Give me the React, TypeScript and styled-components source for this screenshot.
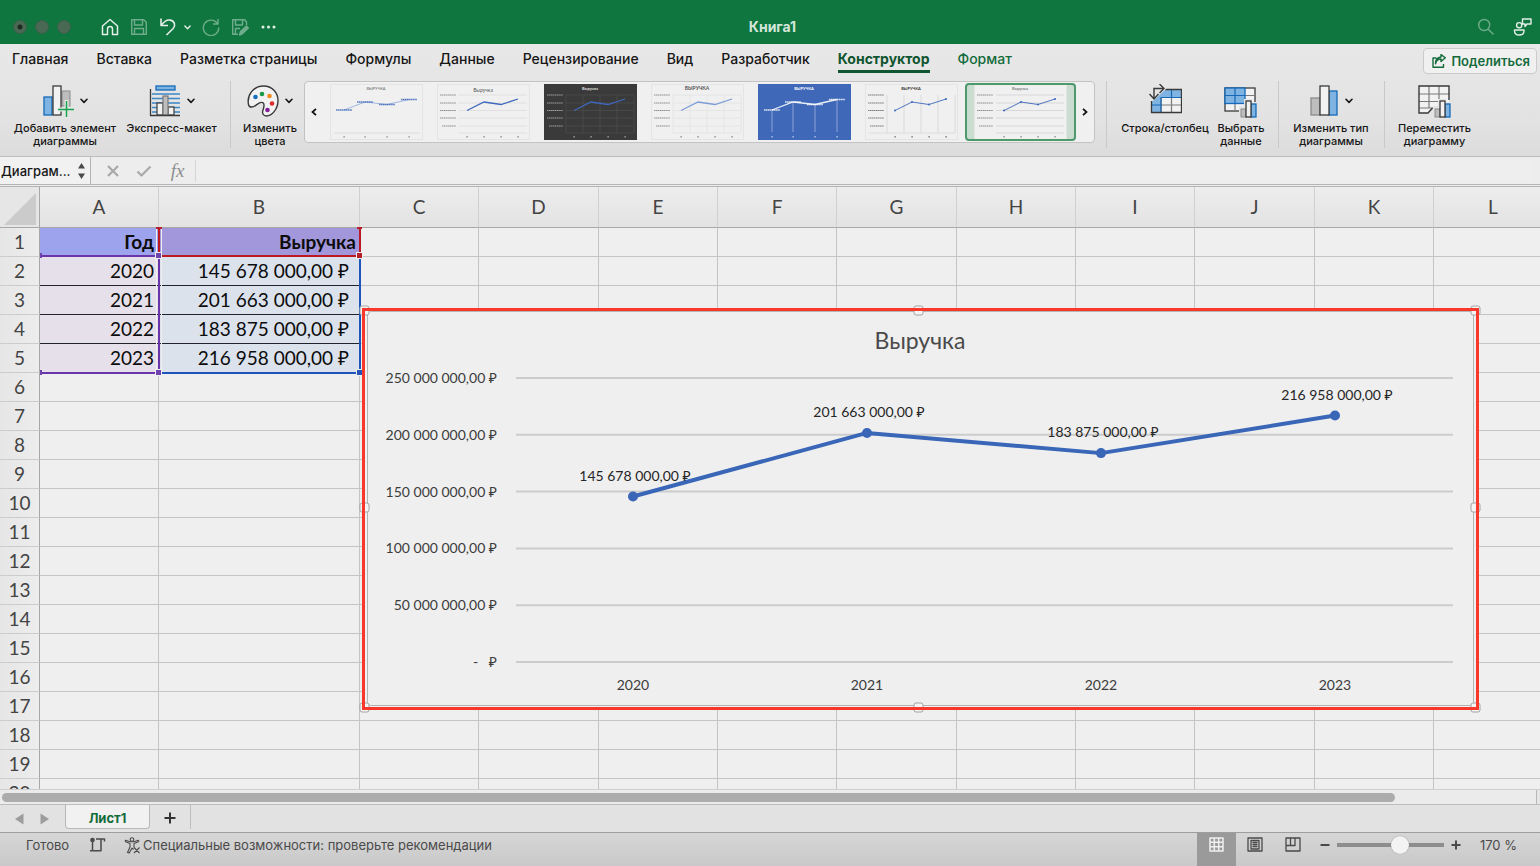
import React from "react";
import styled, { createGlobalStyle, css } from "styled-components";

const UI = `Inter, "Liberation Sans", sans-serif`;
const SHEET = `Lato, "Noto Sans", "Liberation Sans", sans-serif`;

const Global = createGlobalStyle`
  * { box-sizing: border-box; }
  body { margin: 0; font-family: ${UI}; background: #efefef; overflow: hidden; }
  button, input { font-family: inherit; color: inherit; }
  button { border: 0; padding: 0; margin: 0; background: none; }
  svg { display: block; flex: none; }
`;

const Window = styled.div`
  display: flex;
  flex-direction: column;
  height: 100vh;
`;

/* ---------- title bar ---------- */
const TitleBar = styled.header`
  display: grid;
  grid-template-columns: 1fr auto 1fr;
  align-items: center;
  height: 44px;
  padding: 10px 8px 0 13px;
  background: #0f763f;
  color: #e4efe8;
`;
const TitleGroup = styled.div<{ $end?: boolean }>`
  display: flex;
  align-items: center;
  justify-content: ${(p) => (p.$end ? "flex-end" : "flex-start")};
  gap: ${(p) => (p.$end ? 18 : 11)}px;
`;
const UndoGroup = styled.div`
  display: flex;
  align-items: center;
  gap: 7px;
`;
const Lights = styled.div`
  display: flex;
  gap: 8px;
  margin-right: 19px;
`;
const Light = styled.button<{ $dot?: boolean }>`
  width: 14px;
  height: 14px;
  border-radius: 50%;
  border: 1px solid #3b5f49;
  background: ${(p) =>
    p.$dot ? "radial-gradient(circle, #1c2a21 0 2px, #4a6955 3px)" : "#4a6955"};
`;
const Title = styled.h1`
  margin: 0;
  font-size: 14px;
  line-height: 18px;
  font-weight: 700;
  color: #d3e6da;
`;
const IconButton = styled.button<{ $dim?: boolean }>`
  display: flex;
  align-items: center;
  opacity: ${(p) => (p.$dim ? 0.45 : 1)};
`;

/* ---------- ribbon ---------- */
const Ribbon = styled.section`
  height: 112px;
  background: linear-gradient(#e8e8e8, #e2e2e2 70%, #dcdcdc);
`;
const TabRow = styled.nav`
  display: flex;
  align-items: center;
  justify-content: space-between;
  height: 32px;
  padding: 0 3px 0 12px;
`;
const Tabs = styled.div`
  display: flex;
  gap: 28px;
`;
const Tab = styled.button<{ $state?: "active" | "context" }>`
  height: 28px;
  margin-bottom: 2px;
  padding-top: 2px;
  font-size: 14px;
  line-height: 22px;
  font-weight: 500;
  color: #161616;
  border-bottom: 3px solid transparent;
  ${(p) => p.$state && css`color: #136b3b;`}
  ${(p) =>
    p.$state === "active" &&
    css`
      font-weight: 700;
      color: #0f5530;
      border-bottom-color: #0f5530;
    `}
`;
const Share = styled.button`
  display: flex;
  align-items: center;
  gap: 5px;
  height: 26px;
  margin-top: 2px;
  padding: 0 6px 0 8px;
  border: 1px solid #cbcbcb;
  border-radius: 4px;
  background: #f0f0f0;
  color: #136b3b;
  font-size: 13px;
  font-weight: 600;
`;
const Tools = styled.div`
  display: flex;
  height: 80px;
  padding: 5px 61px 8px 12px;
`;
const Tool = styled.button<{ $w: number }>`
  display: flex;
  flex-direction: column;
  align-items: center;
  width: ${(p) => p.$w}px;
  margin-right: 7px;
  padding-top: 3px;
  color: #161616;
  font-size: 11px;
  line-height: 13px;
  font-weight: 500;
  white-space: nowrap;
`;
const ToolIcon = styled.span`
  display: flex;
  align-items: center;
  gap: 6px;
  height: 34px;
  margin-bottom: 4px;
`;
const Divider = styled.span<{ $l?: number; $r?: number }>`
  width: 1px;
  margin: 0 ${(p) => p.$r ?? 12}px 0 ${(p) => p.$l ?? 6}px;
  height: 67px;
  background: #c9c9c9;
`;
const Gallery = styled.div`
  display: flex;
  flex: 1;
  min-width: 0;
  height: 62px;
  border: 1px solid #c3c3c3;
  border-radius: 4px;
  background: #f0f0f0;
  overflow: hidden;
`;
const GalleryArrow = styled.button`
  display: flex;
  align-items: center;
  justify-content: center;
  width: 18px;
`;
const Thumb = styled.button<{ $selected?: boolean }>`
  display: flex;
  flex: 1;
  align-items: center;
  justify-content: center;
  height: 58px;
  margin-top: 1px;
  border-radius: 4px;
  overflow: hidden;
  ${(p) =>
    p.$selected &&
    css`
      background: #cbdcd0;
      border: 2px solid #4c9a6c;
    `}
`;

/* ---------- formula bar ---------- */
const FormulaBar = styled.div`
  display: flex;
  align-items: center;
  height: 31px;
  border-top: 1px solid #bdbdbd;
  border-bottom: 3px double #b4b4b4;
  background: #ededed;
  color: #a9a9a9;
`;
const NameBox = styled.div`
  display: flex;
  align-items: center;
  justify-content: space-between;
  align-self: stretch;
  width: 91px;
  padding: 0 4px 0 1px;
  border-right: 1px solid #b4b4b4;
  background: #f1f1f1;
  color: #161616;
`;
const NameInput = styled.input`
  width: 72px;
  padding: 0;
  border: 0;
  outline: 0;
  background: none;
  font-size: 13px;
  font-weight: 500;
`;
const FxTools = styled.div`
  display: flex;
  align-items: center;
  gap: 16px;
  padding: 0 8px 0 15px;
`;
const FxButton = styled.button`
  width: 19px;
  font: italic 19px/22px "Liberation Serif", serif;
  color: #8f8f8f;
`;
const FormulaInput = styled.input`
  flex: 1;
  height: 22px;
  margin-right: 8px;
  border: 0;
  border-left: 1px solid #d5d5d5;
  outline: 0;
  background: #eeeeee;
`;

/* ---------- sheet ---------- */
const Sheet = styled.main`
  position: relative;
  flex: 1;
  min-height: 0;
  overflow: hidden;
  background: #efefef;
  font-family: ${SHEET};
`;
const Grid = styled.table`
  width: 1553px;
  table-layout: fixed;
  border-collapse: separate;
  border-spacing: 0;
  font-size: 19px;
  line-height: 28px;
  color: #0c0c0c;
`;
const ColHead = styled.th`
  height: 41px;
  padding: 0;
  border-right: 1px solid #d0d0d0;
  border-bottom: 1px solid #a8a8a8;
  background: linear-gradient(#ededed, #e3e3e3);
  color: #444;
  font-weight: 400;
`;
const Corner = styled.th`
  height: 41px;
  padding: 0 2px 0 0;
  border-right: 1px solid #a8a8a8;
  border-bottom: 1px solid #a8a8a8;
  background: #e6e6e6;
`;
const RowHead = styled.th`
  height: 29px;
  padding: 0;
  border-right: 1px solid #a8a8a8;
  border-bottom: 1px solid #cccccc;
  background: linear-gradient(90deg, #e6e6e6, #ededed);
  color: #444;
  font-weight: 400;
`;
type Tone = "yearHead" | "sumHead" | "year" | "sum";
const tones: Record<Tone, string> = {
  yearHead: "#9ea3ee",
  sumHead: "#a397dc",
  year: "#e6e0ea",
  sum: "#dbe2ec",
};
const insets: Record<Tone, number> = { yearHead: 4, sumHead: 3, year: 4, sum: 10 };
const Cell = styled.td<{ $tone?: Tone; $ruled?: boolean }>`
  height: 29px;
  padding: 0 ${(p) => (p.$tone ? insets[p.$tone] : 0)}px 0 0;
  border-right: 1px solid #c4c4c4;
  border-bottom: 1px solid ${(p) => (p.$ruled ? "#22222a" : "#c4c4c4")};
  text-align: right;
  white-space: nowrap;
  font-weight: ${(p) => (p.$tone?.endsWith("Head") ? 700 : 400)};
  background: ${(p) => (p.$tone ? tones[p.$tone] : "transparent")};
`;
const Overlay = styled.svg`
  position: absolute;
  left: 0;
  top: 0;
  pointer-events: none;
`;
const ChartObject = styled.figure`
  position: absolute;
  left: 362px;
  top: 121px;
  margin: 0;
  svg { overflow: visible; }
`;

/* ---------- bottom bars ---------- */
const ScrollRow = styled.div`
  display: flex;
  height: 16px;
  padding-right: 3px;
  border-top: 1px solid #cfcfcf;
  border-bottom: 1px solid #bdbdbd;
  background: #e6e6e6;
`;
const ScrollTrack = styled.div`
  flex: 1;
  padding: 3px 141px 0 2px;
  border-right: 1px solid #b8b8b8;
  background: #ebebeb;
`;
const ScrollThumb = styled.div`
  height: 9px;
  border-radius: 5px;
  background: #acacac;
`;
const SheetTabs = styled.div`
  display: flex;
  height: 27px;
  background: #e2e2e2;
  color: #9c9c9c;
`;
const SheetNav = styled.div`
  display: flex;
  align-items: center;
  gap: 16px;
  width: 65px;
  padding-left: 15px;
`;
const SheetTab = styled.button`
  width: 85px;
  height: 24px;
  padding-top: 2px;
  border: 1px solid #b8b8b8;
  border-top: 0;
  border-radius: 0 0 4px 4px;
  background: #f1f1f1;
  color: #136b3b;
  font-size: 13px;
  font-weight: 700;
`;
const AddSheet = styled.button`
  display: flex;
  align-items: center;
  justify-content: center;
  width: 41px;
  height: 24px;
  padding-top: 2px;
  border-right: 1px solid #bdbdbd;
  color: #333;
`;
const Status = styled.footer`
  display: flex;
  justify-content: space-between;
  height: 34px;
  border-top: 1px solid #9d9d9d;
  background: linear-gradient(#d6d6d6, #c9c9c9);
  color: #4a4a4a;
  font-size: 13px;
`;
const StatusLeft = styled.div`
  display: flex;
  align-items: center;
  height: 24px;
  padding-left: 26px;
`;
const StatusItem = styled.span`
  margin-right: 20px;
`;
const StatusButton = styled.button`
  display: flex;
  align-items: center;
  gap: 2px;
  margin-left: 17px;
  font-size: 13px;
`;
const StatusRight = styled.div`
  display: flex;
`;
const ViewButton = styled.button<{ $active?: boolean }>`
  display: flex;
  justify-content: center;
  align-items: flex-start;
  width: 38px;
  padding-top: 4px;
  ${(p) =>
    p.$active &&
    css`
      width: 39px;
      background: #9a9a9a;
      color: #f0f0f0;
    `}
`;
const Zoom = styled.div`
  display: flex;
  align-items: center;
  gap: 7px;
  height: 24px;
  padding: 0 23px 0 8px;
`;
const ZoomRange = styled.input`
  appearance: none;
  width: 107px;
  height: 18px;
  margin: 0;
  border-radius: 2px;
  background: linear-gradient(#8d8d8d, #8d8d8d) center / 100% 4px no-repeat;
  &::-webkit-slider-thumb {
    appearance: none;
    width: 18px;
    height: 18px;
    border-radius: 50%;
    background: #f3f3f3;
    box-shadow: 0 0 1px #777;
  }
`;
const ZoomValue = styled.span`
  margin-left: 12px;
  white-space: nowrap;
`;

/* ---------- small drawings ---------- */
const Caret = ({ size = 8 }: { size?: number }) => (
  <svg width={size} height={size} viewBox="0 0 8 8" fill="none" stroke="currentColor" strokeWidth="1.6">
    <path d="M1 2.3 4 5.4 7 2.3" strokeLinecap="round" strokeLinejoin="round" />
  </svg>
);
const Line = ({ d, w = 18, h = 18, sw = 1.4, children }: any) => (
  <svg width={w} height={h} viewBox={`0 0 ${w} ${h}`} fill="none" stroke="currentColor" strokeWidth={sw} strokeLinejoin="round">
    {d && <path d={d} />}
    {children}
  </svg>
);

const BLUE = "#7fb4e2";
const EDGE = "#1569b8";
const DARK = "#3a3a3a";

const AddElementIcon = () => (
  <svg width="31" height="34" viewBox="0 0 31 34">
    <rect x="1" y="13" width="8" height="18" fill={BLUE} stroke={EDGE} strokeWidth="1.3" />
    <rect x="19" y="7" width="8" height="15" fill="#bdbdbd" stroke="#8b8b8b" />
    <rect x="10" y="2" width="8" height="29" fill="#f2f2f2" stroke={DARK} strokeWidth="1.3" />
    <path d="M23.5 16v18M15 25.5h16" stroke="#e6e6e6" strokeWidth="4" />
    <path d="M23.5 17v16M15 25.5h16" stroke="#17a34c" strokeWidth="1.5" />
  </svg>
);
const QuickLayoutIcon = () => (
  <svg width="32" height="34" viewBox="0 0 32 34">
    <rect x="7" y="2" width="19" height="4" fill={BLUE} stroke={EDGE} strokeWidth="1.3" />
    <path d="M3 10h28M3 14.500h28M3 19h28M3 23.500h28M3 28h28" stroke="#3a87c8" strokeWidth="1.3" />
    <rect x="8" y="19" width="6" height="12" fill="#f2f2f2" stroke={DARK} strokeWidth="1.2" />
    <rect x="19" y="23" width="6" height="8" fill="#f2f2f2" stroke={DARK} strokeWidth="1.2" />
    <rect x="14" y="12" width="5" height="19" fill="#bdbdbd" stroke="#777" strokeWidth="1.2" />
    <path d="M1.500 5v26.500H31" fill="none" stroke={DARK} strokeWidth="1.3" />
  </svg>
);
const PaletteIcon = () => (
  <svg width="32" height="34" viewBox="0 0 32 34">
    <path
      d="M1.500 20.500C-.3 11 6.500 2 16.500 2 25 2 31 8.500 31 16.500c0 9-6.500 15.500-11.500 15.500-3.300 0-4.700-2.600-3.500-6 1-3 2.200-6-.2-7.300-2.600-1.400-4.600 1-7 2.700-2.900 2-6.600 2.700-7.300-.9z"
      fill="#f2f2f2" stroke={DARK} strokeWidth="1.4"
    />
    <circle cx="8.500" cy="13" r="2.300" fill="#1671c2" />
    <circle cx="15" cy="10" r="2.300" fill="#189a43" />
    <circle cx="22.500" cy="12" r="2.300" fill="#f08a1d" />
    <circle cx="25" cy="19.500" r="2.300" fill="#e02b2b" />
    <circle cx="20.500" cy="26" r="2.300" fill="#85209a" />
  </svg>
);
const SwapIcon = () => (
  <svg width="34" height="34" viewBox="0 0 34 34">
    <rect x="3.500" y="5.500" width="30" height="23" fill="#f2f2f2" />
    <path d="M3.500 13.500 13 5.500h20.500v8H13v15H3.500z" fill={BLUE} />
    <path d="M13 13.500v15M23.500 13.500v15M13 21h20.500" stroke="#7b7b7b" strokeWidth="1.2" />
    <path d="M23.500 5.500v8M13 13.500h20.500M3.500 21H13M13 13.500v15" stroke={EDGE} strokeWidth="1.2" />
    <path d="M17 5.500h16.500v23h-30V17" fill="none" stroke={DARK} strokeWidth="1.3" />
    <path d="M0 0h18v5L5 17H0z" fill="#e5e5e5" />
    <path d="M6 14.500v-10h9.500M1.500 10 6 15l4.500-5M11.500 0l4.500 4.500-4.500 4.500" fill="none" stroke={DARK} strokeWidth="1.4" />
  </svg>
);
const MiniBars = () => (
  <>
    <path d="M15 19h5v-7h8v3h6v17H15z" fill="#e5e5e5" />
    <rect x="17" y="22" width="5" height="8" fill="#bdbdbd" stroke="#8b8b8b" />
    <rect x="27" y="17" width="5" height="13" fill={BLUE} stroke={EDGE} strokeWidth="1.3" />
    <rect x="22" y="14" width="5" height="16" fill="#f2f2f2" stroke={DARK} strokeWidth="1.3" />
  </>
);
const SelectDataIcon = () => (
  <svg width="34" height="34" viewBox="0 0 34 34">
    <g transform="translate(0 3)">
      <rect x="1" y="1" width="30" height="23" fill="#f2f2f2" stroke={DARK} strokeWidth="1.3" />
      <path d="M11 16v8M21 16v8M21 8.500h10M21 16h10" stroke="#7b7b7b" strokeWidth="1.2" />
      <rect x="1" y="1" width="20" height="15.500" fill={BLUE} stroke={EDGE} strokeWidth="1.3" />
      <path d="M11 1v15.500M1 8.500h20" stroke={EDGE} strokeWidth="1.2" />
      <MiniBars />
    </g>
  </svg>
);
const ChangeTypeIcon = () => (
  <svg width="29" height="34" viewBox="0 0 29 34">
    <rect x="1" y="14" width="9" height="17" fill="#bdbdbd" stroke="#8b8b8b" strokeWidth="1.3" />
    <rect x="19" y="7" width="8" height="24" fill={BLUE} stroke={EDGE} strokeWidth="1.3" />
    <rect x="10" y="2" width="9" height="29" fill="#f2f2f2" stroke={DARK} strokeWidth="1.3" />
  </svg>
);
const MoveChartIcon = () => (
  <svg width="34" height="34" viewBox="0 0 34 34">
    <path d="M1 2h30v22H14l-4 5H1z" fill="#f2f2f2" />
    <path d="M11 2v22M21 2v14M1 10h30M1 17.500h20M1 24h14" stroke="#7b7b7b" strokeWidth="1.2" />
    <path d="M14.500 24 10 29H1V2h30v14" fill="none" stroke={DARK} strokeWidth="1.4" />
    <g transform="translate(0 3)"><MiniBars /></g>
  </svg>
);

/* ---------- chart style thumbnails ---------- */
type ThumbStyle = {
  name: string;
  bg: string;
  ink: string;
  line: string;
  grid?: string;
  vertical?: boolean;
  horizontal?: boolean;
  axis?: boolean;
  labels?: boolean;
  drops?: boolean;
  dots?: boolean;
  caps?: boolean;
  bold?: boolean;
  sw: number;
  selected?: boolean;
};
const thumbs: ThumbStyle[] = [
  { name: "Стиль 1", bg: "#f0f0f0", ink: "#666", line: "#8ba8dc", labels: true, caps: true, sw: 0.8 },
  { name: "Стиль 2", bg: "#f0f0f0", ink: "#555", line: "#3d68bb", grid: "#dcdcdc", horizontal: true, axis: true, sw: 1.3 },
  { name: "Стиль 3", bg: "#3a3a3a", ink: "#ddd", line: "#3d68bb", grid: "#4b4b4b", horizontal: true, vertical: true, axis: true, bold: true, sw: 1.3 },
  { name: "Стиль 4", bg: "#f0f0f0", ink: "#555", line: "#7c9cd8", grid: "#e2e2e2", horizontal: true, vertical: true, axis: true, caps: true, bold: true, sw: 1.3 },
  { name: "Стиль 5", bg: "#3f68b8", ink: "#fff", line: "#e8eefa", labels: true, drops: true, caps: true, bold: true, sw: 1.3 },
  { name: "Стиль 6", bg: "#f0f0f0", ink: "#333", line: "#3d68bb", grid: "#d4d4d4", vertical: true, axis: true, dots: true, caps: true, bold: true, sw: 0.9 },
  { name: "Стиль 7", bg: "#f0f0f0", ink: "#555", line: "#3d68bb", grid: "#d2d2d2", horizontal: true, axis: true, dots: true, sw: 0.9, selected: true },
];
const ThumbChart = ({ s }: { s: ThumbStyle }) => {
  const xs = s.axis ? [30, 47, 64, 81] : [14, 35, 57, 79];
  const ys = s.axis ? [26.5, 18, 20.5, 15] : [26, 18, 20.5, 15.5];
  const light = s.bg === "#f0f0f0";
  return (
    <svg width="93" height="56" viewBox="0 0 93 56" fontFamily="Lato, sans-serif" fill={s.ink}>
      <rect x=".5" y=".5" width="92" height="55" fill={s.bg} stroke={light ? "#e4e4e4" : s.bg} />
      <text x="46" y={s.name === "Стиль 2" ? 8 : 6} fontSize={s.name === "Стиль 2" || s.name === "Стиль 4" ? 5 : 4} textAnchor="middle" fontWeight={s.bold ? 700 : 400}>
        {s.caps ? "ВЫРУЧКА" : "Выручка"}
      </text>
      {s.horizontal && [11, 19, 26.500, 34, 42, 49].map((y) => <path key={y} d={`M22 ${y}H90`} stroke={s.grid} strokeWidth=".8" />)}
      {s.vertical && [22, 39, 56, 73, 90].map((x) => <path key={x} d={`M${x} 11V49`} stroke={s.grid} strokeWidth=".8" />)}
      {!s.horizontal && !s.drops && <path d="M4 49H90" stroke="#d8d8d8" strokeWidth=".8" />}
      {s.axis &&
        [11, 19, 26.500, 34, 42].map((y) => (
          <path key={y} d={`M${y > 40 ? 5 : 3} ${y}H19`} stroke={s.ink} strokeWidth="1.1" strokeDasharray="1.500 .4" opacity=".6" />
        ))}
      <polyline points={xs.map((x, i) => `${x},${ys[i]}`).join(" ")} fill="none" stroke={s.line} strokeWidth={s.sw} />
      {xs.map((x, i) => (
        <g key={x}>
          {s.drops && <path d={`M${x} ${ys[i]}V48`} stroke="#a9bee6" strokeWidth=".7" />}
          {s.labels && <path d={`M${x - 8} ${ys[i]}h16`} stroke={s.drops ? "#fff" : "#3d68bb"} strokeWidth="1.3" strokeDasharray="1.500 .4" opacity=".85" />}
          {s.dots && <circle cx={x} cy={ys[i]} r="1" fill={s.line} />}
          <rect x={x - 0.5} y="52" width="1.200" height="1.500" opacity=".7" />
        </g>
      ))}
    </svg>
  );
};

/* ---------- data ---------- */
const rows = [
  { year: "2020", value: 145678000, text: "145 678 000,00 ₽" },
  { year: "2021", value: 201663000, text: "201 663 000,00 ₽" },
  { year: "2022", value: 183875000, text: "183 875 000,00 ₽" },
  { year: "2023", value: 216958000, text: "216 958 000,00 ₽" },
];
const columns = [
  ["A", 119], ["B", 201], ["C", 119], ["D", 120], ["E", 119], ["F", 119],
  ["G", 120], ["H", 119], ["I", 119], ["J", 120], ["K", 119], ["L", 119],
] as const;
const rowNumbers = Array.from({ length: 20 }, (_, i) => i + 1);

const Chart = () => {
  const y = (v: number) => 354 - (v / 250e6) * 284;
  const x = (i: number) => 271 + i * 234;
  const axis: [number, string][] = [
    [250e6, "250 000 000,00 ₽"],
    [200e6, "200 000 000,00 ₽"],
    [150e6, "150 000 000,00 ₽"],
    [100e6, "100 000 000,00 ₽"],
    [50e6, "50 000 000,00 ₽"],
    [0, "-   ₽"],
  ];
  const handles = [[2, 2], [556, 2], [1113, 2], [2, 199], [1113, 199], [2, 399], [556, 399], [1113, 399]];
  return (
    <svg width="1117" height="402" viewBox="0 0 1117 402" fontFamily={SHEET} fontSize="14" fill="#3c3c3c" role="img" aria-label="Выручка">
      <rect x="0" y="0" width="1117" height="402" fill="#efefef" />
      <rect x="5.500" y="3.500" width="1106" height="394" rx="3" fill="#efefef" stroke="#b4b4b4" />
      {handles.map(([hx, hy]) => (
        <rect key={`${hx}-${hy}`} x={hx - 4} y={hy - 4} width="9" height="9" rx="2" fill="#f4f4f4" stroke="#a3a3a3" />
      ))}
      <rect x="1.500" y="1.500" width="1114" height="399" fill="none" stroke="#f8382a" strokeWidth="3" />
      <text x="558" y="41" fontSize="23" textAnchor="middle" fill="#4a4a4a">Выручка</text>
      {axis.map(([v, label]) => (
        <g key={v}>
          <path d={`M154 ${y(v)}H1091`} stroke="#cccccc" strokeWidth="2" />
          <text x="135" y={y(v) + 5} textAnchor="end" style={{ whiteSpace: "pre" }}>{label}</text>
        </g>
      ))}
      <polyline points={rows.map((r, i) => `${x(i)},${y(r.value)}`).join(" ")} fill="none" stroke="#3a66b8" strokeWidth="4" strokeLinejoin="round" />
      {rows.map((r, i) => (
        <g key={r.year} textAnchor="middle">
          <circle cx={x(i)} cy={y(r.value)} r="5" fill="#3a66b8" />
          <text x={x(i) + 2} y={y(r.value) - 16} fill="#262626">{r.text}</text>
          <text x={x(i)} y="382">{r.year}</text>
        </g>
      ))}
    </svg>
  );
};

const RangeOutlines = () => (
  <Overlay width="364" height="190" viewBox="0 0 364 190" fill="none" strokeWidth="2">
    <path d="M156.500 42V67M161.500 42V67M361.500 42V67M161.500 72V184M156.500 72V184" stroke="#efefef" strokeWidth="1" />
    <path d="M40 69H158M40 186H158M159 71V184" stroke="#6a35ab" />
    <path d="M159 41V66M360 41V66M161 69H357" stroke="#bb1a22" />
    <path d="M360 72V184M161 186H357" stroke="#1f54bb" />
    <g stroke="#efefef" strokeWidth="1">
      <rect x="155.500" y="65.500" width="6" height="6" fill="#6f42ad" />
      <rect x="356.500" y="65.500" width="6" height="6" fill="#b5202a" />
      <rect x="155.500" y="182.500" width="6" height="6" fill="#6f42ad" />
      <rect x="356.500" y="182.500" width="6" height="6" fill="#2353b4" />
    </g>
    <path d="M41 66v5M41 183v5" stroke="#6f42ad" />
    <path d="M156 41h6M357 41h5" stroke="#b5202a" />
  </Overlay>
);

const menu: { label: string; state?: "active" | "context" }[] = [
  { label: "Главная" }, { label: "Вставка" }, { label: "Разметка страницы" },
  { label: "Формулы" }, { label: "Данные" }, { label: "Рецензирование" },
  { label: "Вид" }, { label: "Разработчик" },
  { label: "Конструктор", state: "active" }, { label: "Формат", state: "context" },
];

export default function App() {
  return (
    <Window>
      <Global />
      <TitleBar>
        <TitleGroup>
          <Lights>
            <Light $dot aria-label="Закрыть" />
            <Light aria-label="Свернуть" />
            <Light aria-label="Развернуть" />
          </Lights>
          <IconButton aria-label="Домой">
            <Line sw={1.5} d="M1.500 8 9 1.500 16.500 8v8.500H11.500V11a2.500 2.500 0 0 0-5 0v5.500H1.500z" />
          </IconButton>
          <IconButton $dim aria-label="Сохранить">
            <Line d="M1.700 1.700h12l2.600 2.500v12.100H1.700zM4.500 2v5h8V2M4.500 16v-5.500h9V16" />
          </IconButton>
          <UndoGroup>
            <IconButton aria-label="Отменить">
              <Line sw={1.6} d="M2 .5v7h7M2.300 7.300C5 3.500 8 1.500 11.300 2.100c4.200.8 5.700 5.300 2.900 8.400L7.500 17" />
            </IconButton>
            <Caret size={7} />
          </UndoGroup>
          <IconButton $dim aria-label="Вернуть">
            <Line d="M16 1v5h-5M15.500 5.700A7.700 7.700 0 1 0 16.700 9.500" />
          </IconButton>
          <IconButton $dim aria-label="Сохранить как">
            <Line d="M7 16.300H1.700V1.700h12L15.500 4V7M4.500 2v5h7V2M4.500 16v-5.500H9">
              <path d="M8.500 17l1-3.500 6-5.500 1.800 2-6 5.800z" fill="currentColor" />
            </Line>
          </IconButton>
          <IconButton aria-label="Ещё">
            <svg width="16" height="4" fill="currentColor"><circle cx="3" cy="2" r="1.500" /><circle cx="8.500" cy="2" r="1.500" /><circle cx="14" cy="2" r="1.500" /></svg>
          </IconButton>
        </TitleGroup>
        <Title>Книга1</Title>
        <TitleGroup $end>
          <IconButton $dim aria-label="Поиск">
            <Line d="M11 11l5.500 5.500"><circle cx="7.200" cy="7" r="5.500" /></Line>
          </IconButton>
          <IconButton aria-label="Собеседники">
            <Line w={19} d="M1.500 12h9.500v1c0 2.700-2 4-4.700 4S1.500 15.700 1.500 13zM9.500 1h8.500v5h-4l-2 2.500V6H9.500z">
              <circle cx="6.200" cy="7.200" r="2.600" />
            </Line>
          </IconButton>
        </TitleGroup>
      </TitleBar>

      <Ribbon>
        <TabRow>
          <Tabs>
            {menu.map((m) => <Tab key={m.label} $state={m.state}>{m.label}</Tab>)}
          </Tabs>
          <Share>
            <Line w={14} h={14} d="M4.500 4H1v9.300h10.500V10M3.500 9.800C4 7 6 5 9 5V7.500L13.300 3.800 9 .6V3C5.500 3.300 3.500 6 3.500 9.800z" />
            Поделиться
          </Share>
        </TabRow>
        <Tools>
          <Tool $w={106}><ToolIcon><AddElementIcon /><Caret /></ToolIcon>Добавить элемент<br />диаграммы</Tool>
          <Tool $w={93}><ToolIcon><QuickLayoutIcon /><Caret /></ToolIcon>Экспресс-макет</Tool>
          <Divider $l={5} />
          <Tool $w={54}><ToolIcon><PaletteIcon /><Caret /></ToolIcon>Изменить<br />цвета</Tool>
          <Gallery>
            <GalleryArrow aria-label="Предыдущие стили">
              <svg width="8" height="8" viewBox="0 0 8 8" fill="none" stroke="#111" strokeWidth="1.8"><path d="M6 .8 2.500 4 6 7.200" /></svg>
            </GalleryArrow>
            {thumbs.map((s) => (
              <Thumb key={s.name} $selected={s.selected} aria-label={s.name}><ThumbChart s={s} /></Thumb>
            ))}
            <GalleryArrow aria-label="Следующие стили">
              <svg width="8" height="8" viewBox="0 0 8 8" fill="none" stroke="#111" strokeWidth="1.8"><path d="M2 .8 5.500 4 2 7.200" /></svg>
            </GalleryArrow>
          </Gallery>
          <Divider $l={11} $r={13} />
          <Tool $w={90}><ToolIcon><SwapIcon /></ToolIcon>Строка/столбец</Tool>
          <Tool $w={48}><ToolIcon><SelectDataIcon /></ToolIcon>Выбрать<br />данные</Tool>
          <Divider />
          <Tool $w={80}><ToolIcon><ChangeTypeIcon /><Caret /></ToolIcon>Изменить тип<br />диаграммы</Tool>
          <Divider />
          <Tool $w={75}><ToolIcon><MoveChartIcon /></ToolIcon>Переместить<br />диаграмму</Tool>
        </Tools>
      </Ribbon>

      <FormulaBar>
        <NameBox>
          <NameInput aria-label="Имя объекта" defaultValue="Диаграм..." />
          <svg width="9" height="20" fill="#4a4a4a"><path d="M1 7.500 4.500 2 8 7.500zM1 12.500 4.500 18 8 12.500z" /></svg>
        </NameBox>
        <FxTools>
          <IconButton aria-label="Отмена"><Line w={14} h={14} sw={2.2} d="M2 2l10 10M12 2 2 12" /></IconButton>
          <IconButton aria-label="Ввод"><Line w={16} h={14} sw={2.2} d="M1.500 7.500 5.500 11.500 14.500 2.500" /></IconButton>
          <FxButton aria-label="Вставить функцию">fx</FxButton>
        </FxTools>
        <FormulaInput aria-label="Строка формул" />
      </FormulaBar>

      <Sheet>
        <Grid>
          <colgroup>
            <col style={{ width: 40 }} />
            {columns.map(([name, width]) => <col key={name} style={{ width }} />)}
          </colgroup>
          <thead>
            <tr>
              <Corner aria-label="Выделить всё">
                <svg width="36" height="36"><path d="M36 4v32H4z" fill="#cbcbcb" /></svg>
              </Corner>
              {columns.map(([name]) => <ColHead key={name} scope="col">{name}</ColHead>)}
            </tr>
          </thead>
          <tbody>
            {rowNumbers.map((n) => {
              const rec = rows[n - 2];
              return (
                <tr key={n}>
                  <RowHead scope="row">{n}</RowHead>
                  {columns.map(([name]) => {
                    if (name === "A" && n === 1) return <Cell key={name} $tone="yearHead">Год</Cell>;
                    if (name === "B" && n === 1) return <Cell key={name} $tone="sumHead">Выручка</Cell>;
                    if (name === "A" && rec) return <Cell key={name} $tone="year" $ruled>{rec.year}</Cell>;
                    if (name === "B" && rec) return <Cell key={name} $tone="sum" $ruled>{rec.text}</Cell>;
                    return <Cell key={name} />;
                  })}
                </tr>
              );
            })}
          </tbody>
        </Grid>
        <RangeOutlines />
        <ChartObject><Chart /></ChartObject>
      </Sheet>

      <ScrollRow><ScrollTrack><ScrollThumb /></ScrollTrack></ScrollRow>
      <SheetTabs>
        <SheetNav>
          <IconButton aria-label="Предыдущий лист"><svg width="9" height="12" fill="currentColor"><path d="M8.500 .5v11L0 6z" /></svg></IconButton>
          <IconButton aria-label="Следующий лист"><svg width="9" height="12" fill="currentColor"><path d="M.5 .5v11L9 6z" /></svg></IconButton>
        </SheetNav>
        <SheetTab>Лист1</SheetTab>
        <AddSheet aria-label="Добавить лист"><Line w={12} h={12} sw={2} d="M6 .5v11M.5 6h11" /></AddSheet>
      </SheetTabs>
      <Status>
        <StatusLeft>
          <StatusItem>Готово</StatusItem>
          <Line w={18} h={16} sw={1.5} d="M3.500 4v9.500M1 13.800H12V2M7 2h8.500v2.500">
            <circle cx="3.500" cy="3" r="2.300" fill="currentColor" stroke="none" />
          </Line>
          <StatusButton>
            <Line w={17} h={17} sw={1.1} d="M1 4.500 6 6.500v3.500L3.500 15.500l1.700.6L8 11M15 4.500 10 6.500v4M8 11l1.500 1.500M1 4.500l.6-1.200 4.400 1.500h4L14.300 3.300 15 4.500M10 10.500l5.500 5.500M15.500 10.500 10 16">
              <circle cx="8" cy="2.500" r="1.800" />
            </Line>
            Специальные возможности: проверьте рекомендации
          </StatusButton>
        </StatusLeft>
        <StatusRight>
          <ViewButton $active aria-label="Обычный">
            <Line w={15} h={15} sw={1.5} d="M1 1h13v13H1zM5.300 1v13M9.700 1v13M1 5.300h13M1 9.700h13" />
          </ViewButton>
          <ViewButton aria-label="Разметка страницы">
            <Line w={16} h={15} sw={1.3} d="M1 1h14v13H1zM4 3.500h8v8.500H4zM5.500 5.500h5M5.500 7.500h5M5.500 9.500h5" />
          </ViewButton>
          <ViewButton aria-label="Страничный режим">
            <Line w={16} h={15} sw={1.3} d="M1 1h14v13H1zM1 8.500h9V1M5.500 1v7.500" />
          </ViewButton>
          <Zoom>
            <IconButton aria-label="Уменьшить"><Line w={10} h={10} sw={2} d="M.5 5h9" /></IconButton>
            <ZoomRange type="range" aria-label="Масштаб" min={0} max={100} defaultValue={61} />
            <IconButton aria-label="Увеличить"><Line w={10} h={10} sw={2} d="M.5 5h9M5 .5v9" /></IconButton>
            <ZoomValue>170 %</ZoomValue>
          </Zoom>
        </StatusRight>
      </Status>
    </Window>
  );
}
